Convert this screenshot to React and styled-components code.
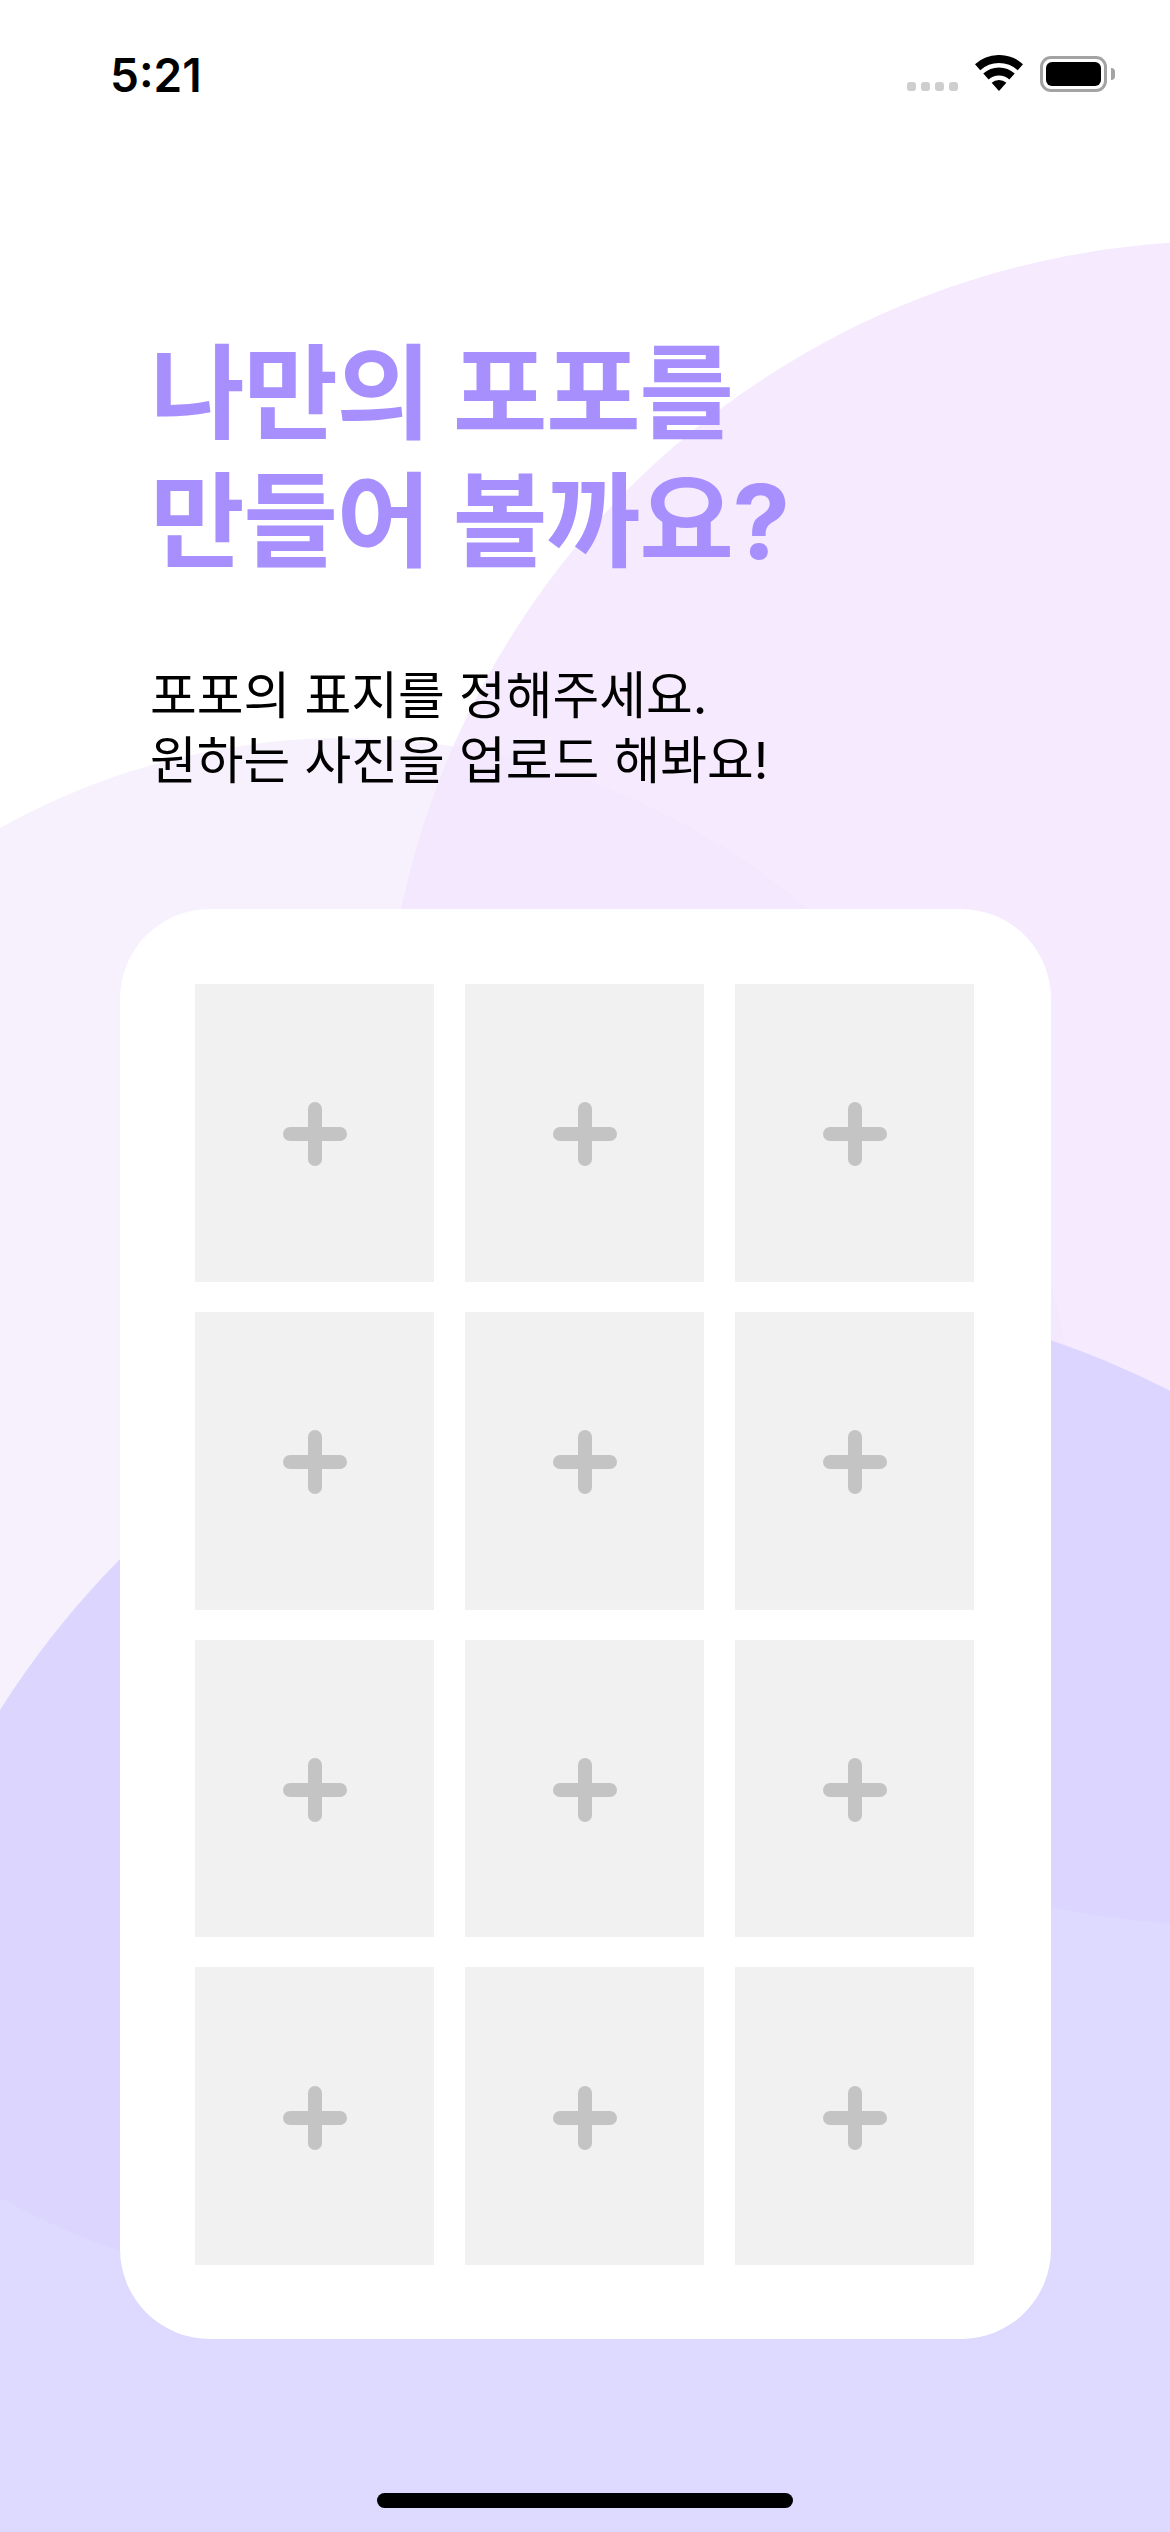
import React from "react";
import styled, { createGlobalStyle } from "styled-components";

const Global = createGlobalStyle`
  html, body { margin: 0; padding: 0; background: #fff; }
  * { box-sizing: border-box; }
`;

const Page = styled.main`
  position: relative;
  width: 1170px;
  height: 2532px;
  overflow: hidden;
  background: #fff;
  display: flex;
  flex-direction: column;
  font-family: Inter, "Noto Sans CJK KR", sans-serif;
`;

const Backdrop = styled.svg`
  position: absolute;
  inset: 0;
  width: 1170px;
  height: 2532px;
`;

const Layer = styled.div`
  position: relative;
  display: flex;
  flex-direction: column;
  height: 100%;
`;

const StatusBar = styled.header`
  height: 100px;
  padding: 50px 63px 0 110px;
  display: flex;
  justify-content: space-between;
  align-items: flex-start;
`;

const Time = styled.span`
  font-size: 46px;
  line-height: 50px;
  font-weight: 600;
  color: #000;
`;

const StatusIcons = styled.div`
  display: flex;
  align-items: flex-start;
  padding-top: 5px;
`;

const Signal = styled.div`
  display: flex;
  gap: 5px;
  margin: 27px 17px 0 0;
`;

const SignalDot = styled.span`
  width: 9px;
  height: 9px;
  border-radius: 3px;
  background: #cecece;
`;

const Wifi = styled.svg`
  width: 48px;
  height: 36px;
  margin-right: 17px;
  display: block;
`;

const Battery = styled.div`
  width: 67px;
  height: 36px;
  margin-top: 1px;
  padding: 3px;
  border: 3px solid #a3a3a3;
  border-radius: 11px;
  position: relative;
`;

const BatteryFill = styled.div`
  width: 100%;
  height: 100%;
  background: #000;
  border-radius: 6px;
`;

const BatteryNub = styled.span`
  position: absolute;
  left: 65px;
  top: 9px;
  width: 4px;
  height: 12px;
  margin-left: 3px;
  background: #a3a3a3;
  border-radius: 0 4px 4px 0;
`;

const Intro = styled.section`
  padding: 230px 0 0 150px;
  height: 809px;
`;

const Title = styled.h1`
  margin: 0;
  font-size: 103px;
  line-height: 128px;
  font-weight: 700;
  color: #a78ffe;
  letter-spacing: -1.5px;
`;

const Lead = styled.p`
  margin: 77px 0 0;
  font-size: 50.8px;
  line-height: 65px;
  font-weight: 400;
  color: #000;
  letter-spacing: 0;
`;

const Card = styled.section`
  width: 931px;
  height: 1430px;
  margin-left: 120px;
  padding: 75px 77px 74px 75px;
  background: #fff;
  border-radius: 90px;
  display: grid;
  grid-template-columns: repeat(3, 239px);
  grid-template-rows: repeat(4, 1fr);
  column-gap: 31px;
  row-gap: 30px;
`;

const Slot = styled.button`
  border: 0;
  padding: 3px 0 0;
  background: #f1f1f1;
  display: flex;
  align-items: center;
  justify-content: center;
`;

const PlusIcon = styled.svg`
  width: 64px;
  height: 64px;
  display: block;
`;

const HomeBar = styled.div`
  width: 416px;
  height: 15px;
  margin: 154px auto 0;
  border-radius: 8px;
  background: #000;
`;

const Plus = () => (
  <PlusIcon viewBox="0 0 64 64" fill="#c4c4c4">
    <rect x="25" y="0" width="14" height="64" rx="7" />
    <rect x="0" y="25" width="64" height="14" rx="7" />
  </PlusIcon>
);

export default function App() {
  return (
    <Page>
      <Global />
      <Backdrop viewBox="0 0 1170 2532">
        <circle cx="1225" cy="1083" r="842" fill="#f5eafe" />
        <ellipse cx="345" cy="1513" rx="738" ry="775" fill="rgba(240,229,253,0.55)" />
        <circle cx="760" cy="2192" r="900" fill="rgba(212,207,255,0.8)" />
      </Backdrop>
      <Layer>
        <StatusBar>
          <Time>5:21</Time>
          <StatusIcons>
            <Signal>
              {[0, 1, 2, 3].map((i) => (
                <SignalDot key={i} />
              ))}
            </Signal>
            <Wifi viewBox="0 0 48 36">
              <path d="M2.6 12.2A32 32 0 0 1 45.4 12.2" fill="none" stroke="#000" strokeWidth="8" />
              <path d="M10.95 21.5A19.5 19.5 0 0 1 37.05 21.5" fill="none" stroke="#000" strokeWidth="8" />
              <path d="M24 36L16.64 27.83A11 11 0 0 1 31.36 27.83Z" fill="#000" />
            </Wifi>
            <Battery>
              <BatteryFill />
              <BatteryNub />
            </Battery>
          </StatusIcons>
        </StatusBar>
        <Intro>
          <Title>
            나만의 포포를
            <br />
            만들어 볼까요?
          </Title>
          <Lead>
            포포의 표지를 정해주세요.
            <br />
            원하는 사진을 업로드 해봐요!
          </Lead>
        </Intro>
        <Card>
          {Array.from({ length: 12 }, (_, i) => (
            <Slot key={i} type="button" aria-label="사진 추가">
              <Plus />
            </Slot>
          ))}
        </Card>
        <HomeBar />
      </Layer>
    </Page>
  );
}
